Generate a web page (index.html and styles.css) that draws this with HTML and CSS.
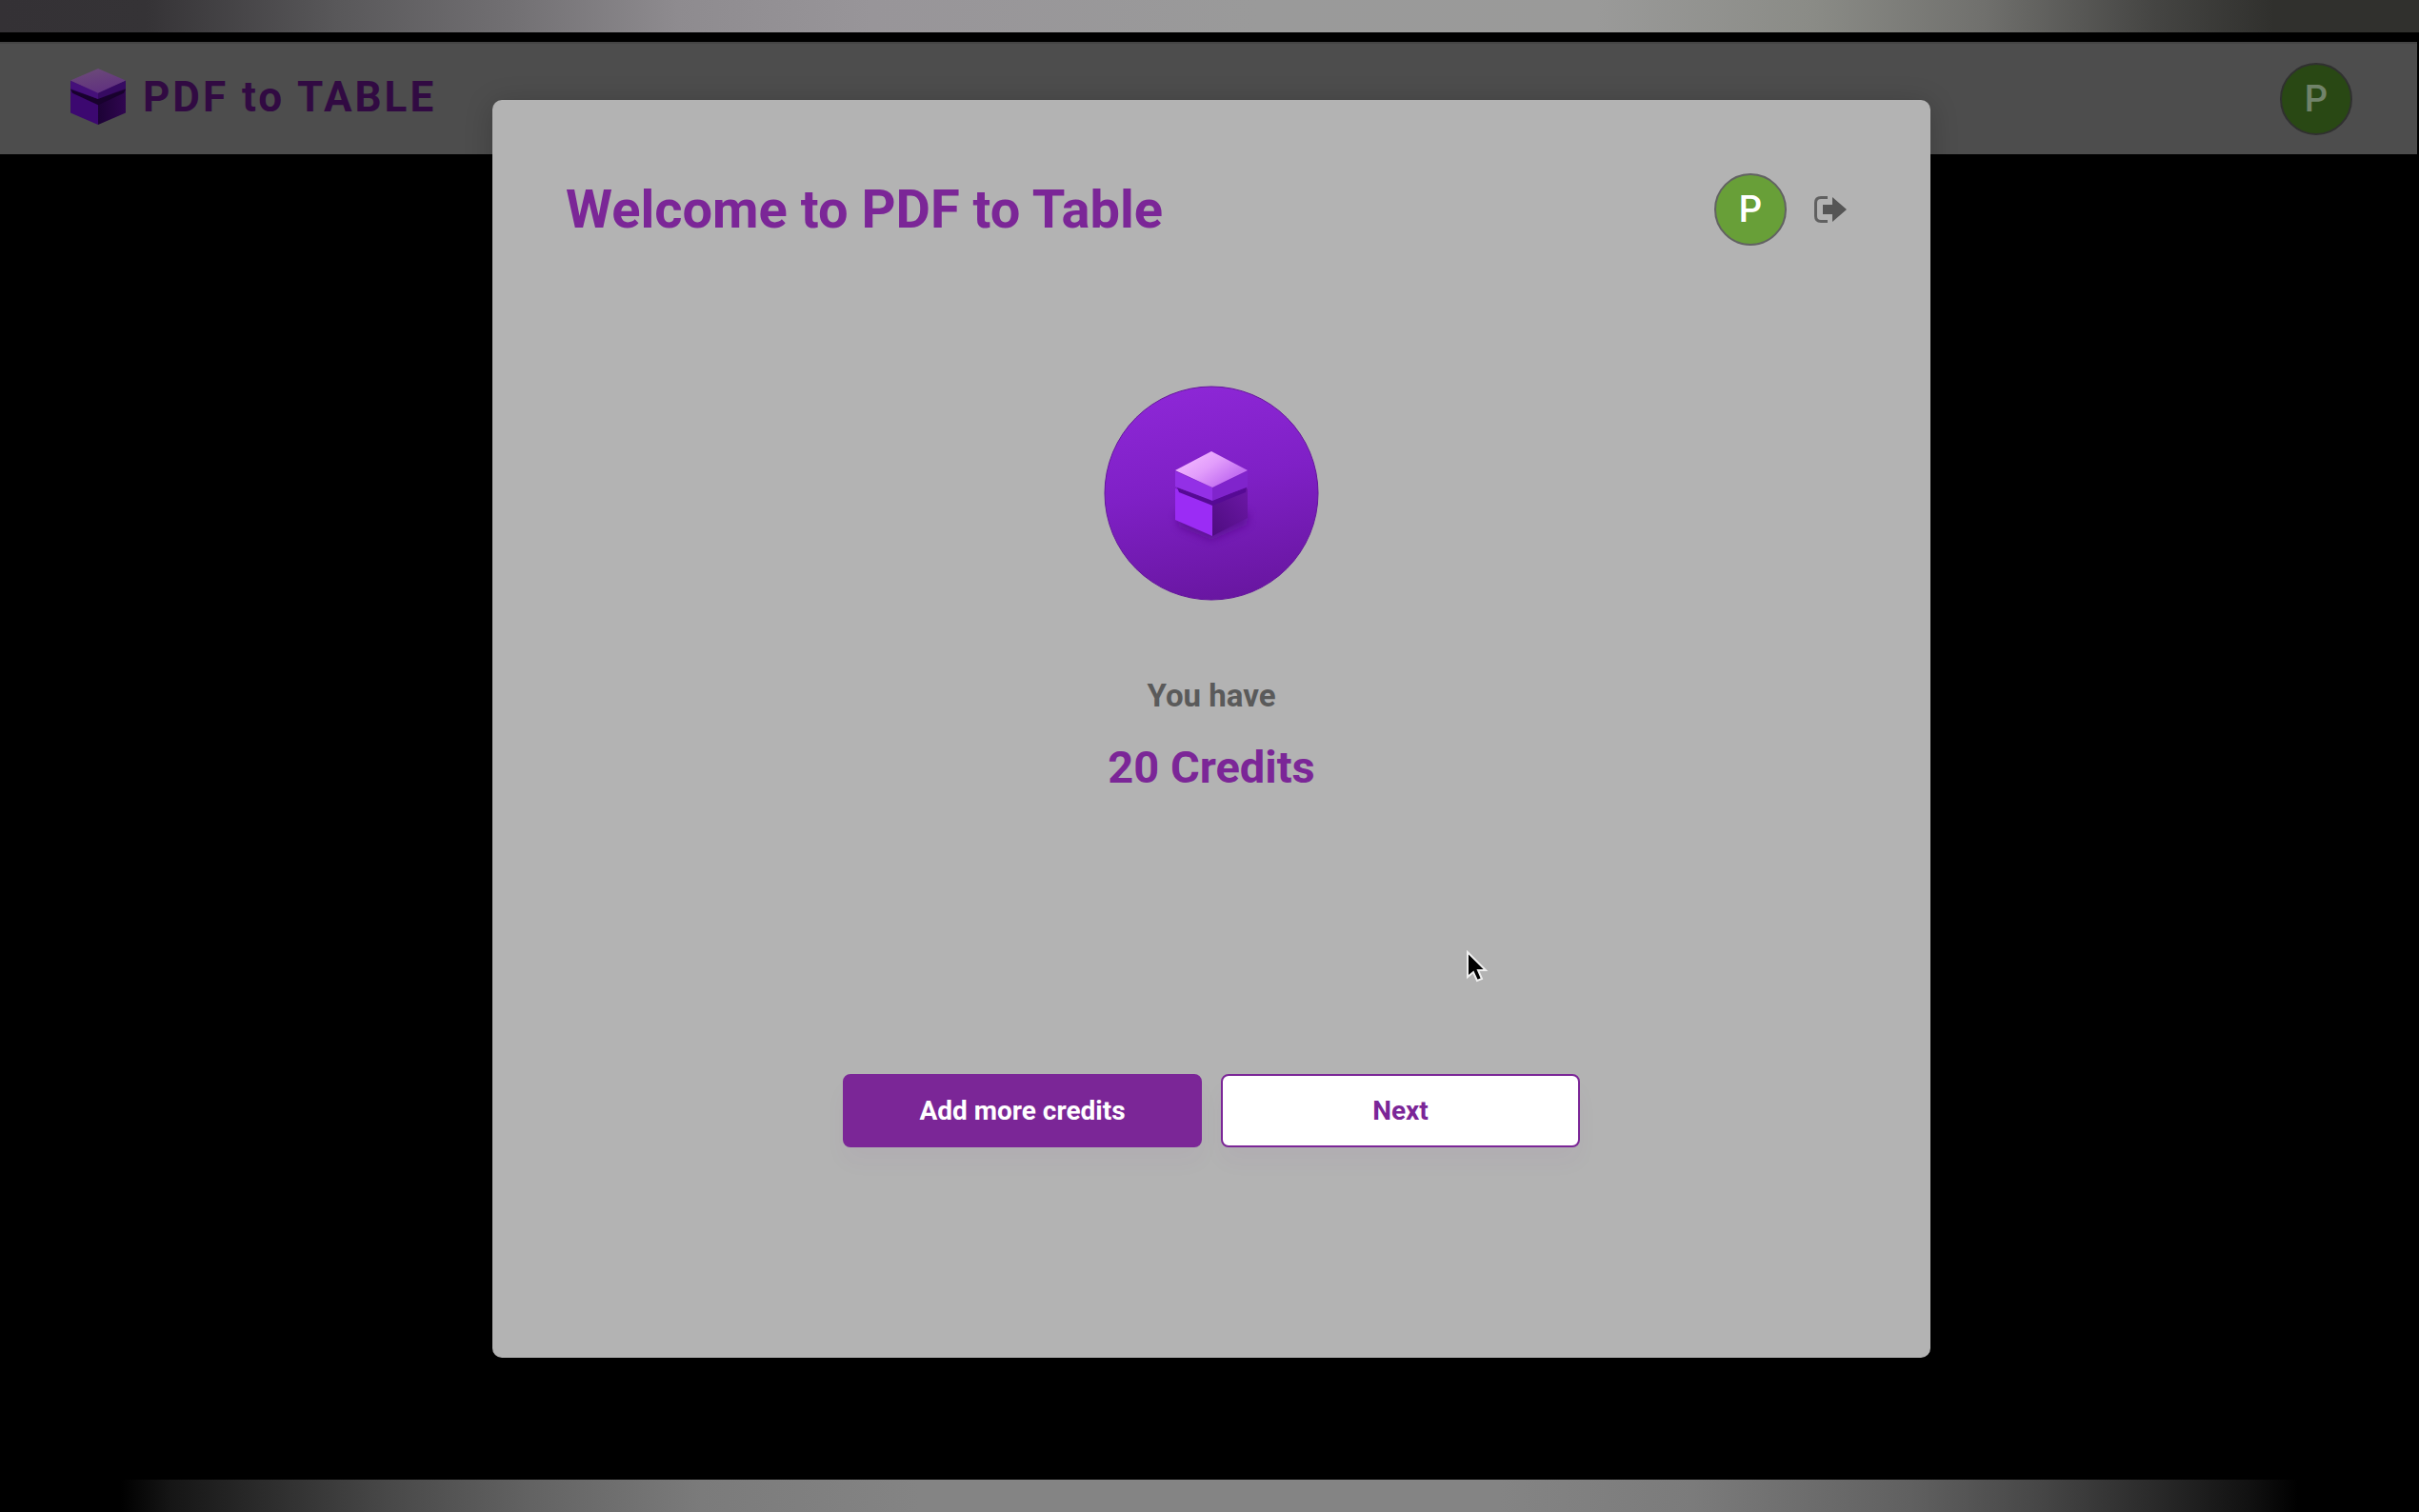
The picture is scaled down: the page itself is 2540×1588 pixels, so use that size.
FILE: index.html
```html
<!DOCTYPE html>
<html lang="en">
<head>
    <meta charset="UTF-8">
    <meta name="viewport" content="width=device-width, initial-scale=1.0">
    <title>PDF to Table</title>
    <link rel="stylesheet" href="styles.css">
</head>
<body>
    <div class="strip strip-top"></div>

    <div class="app">
        <header class="header">
            <a class="brand" href="#">
                <svg class="brand-logo" viewBox="0 0 58 58" aria-hidden="true">
                    <defs>
                        <linearGradient id="brand-top" x1="0.2" y1="0" x2="0.6" y2="1">
                            <stop offset="0" stop-color="#6c4b78"/>
                            <stop offset="1" stop-color="#603080"/>
                        </linearGradient>
                        <linearGradient id="brand-right" x1="0" y1="0" x2="1" y2="0">
                            <stop offset="0" stop-color="#1c0235"/>
                            <stop offset="1" stop-color="#300650"/>
                        </linearGradient>
                    </defs>
                    <path d="M1 14L29 28V57L1 45Z" fill="#3c0870"/>
                    <path d="M57 14L29 28V57L57 45Z" fill="url(#brand-right)"/>
                    <path d="M1 21L29 31L57 21L55 25L29 37L3 25Z" fill="#18022d"/>
                    <path d="M1 12L29 24V31L1 20Z" fill="#45107a"/>
                    <path d="M57 12L29 24V31L57 20Z" fill="#360a62"/>
                    <path d="M29 0L57 12L29 25L1 12Z" fill="url(#brand-top)"/>
                </svg>
                <span class="brand-name">PDF to TABLE</span>
            </a>
            <button class="avatar avatar-dimmed" aria-label="Account">P</button>
        </header>

        <div class="overlay">
            <main class="modal" role="dialog" aria-labelledby="modal-title">
                <div class="modal-header">
                    <h1 class="modal-title" id="modal-title">Welcome to PDF to Table</h1>
                    <div class="modal-actions">
                        <button class="avatar" aria-label="Account">P</button>
                        <button class="logout-button" aria-label="Log out">
                            <svg viewBox="0 0 34 28" width="34" height="28">
                                <path d="M14 1.500H7Q1.500 1.500 1.500 7V21Q1.500 26.500 7 26.500H14" fill="none" stroke="#606060" stroke-width="3"/>
                                <path d="M9 9H19V1L34 14L19 27V19H9Z" fill="#555"/>
                            </svg>
                        </button>
                    </div>
                </div>

                <svg class="credit-badge" viewBox="0 0 226 226" aria-hidden="true">
                    <defs>
                        <linearGradient id="badge-bg" x1="0.4" y1="0" x2="0.6" y2="1">
                            <stop offset="0" stop-color="#8d27d6"/>
                            <stop offset="0.45" stop-color="#7f20c6"/>
                            <stop offset="1" stop-color="#6816a0"/>
                        </linearGradient>
                        <linearGradient id="cube-top" x1="0.1" y1="0.2" x2="0.8" y2="0.7">
                            <stop offset="0" stop-color="#f2b8ff"/>
                            <stop offset="0.5" stop-color="#e29dfb"/>
                            <stop offset="1" stop-color="#c470f2"/>
                        </linearGradient>
                        <linearGradient id="cube-right" x1="0" y1="1" x2="1" y2="0">
                            <stop offset="0" stop-color="#4e0c80"/>
                            <stop offset="1" stop-color="#6c18a6"/>
                        </linearGradient>
                        <filter id="soft" x="-50%" y="-50%" width="200%" height="200%">
                            <feGaussianBlur stdDeviation="5"/>
                        </filter>
                    </defs>
                    <circle cx="113" cy="113" r="112" fill="url(#badge-bg)" stroke="#65169c" stroke-width="1"/>
                    <path d="M77 132L113 148L152 132L150 146L113 162L79 148Z" fill="#560f8c" opacity="0.8" filter="url(#soft)"/>
                    <path d="M75 108L114 122V158L75 141Z" fill="#9b2cf5"/>
                    <path d="M151 108L114 122V158L151 139Z" fill="url(#cube-right)"/>
                    <path d="M77 107L114 120L150 107L149 112L114 126L79 112Z" fill="#560a94"/>
                    <path d="M75 90L114 107V121L75 106Z" fill="#9330e6"/>
                    <path d="M151 90L114 107V121L151 106Z" fill="#8024cc"/>
                    <path d="M113 69L151 89L114 107L75 89Z" fill="url(#cube-top)"/>
                </svg>

                <p class="credit-label">You have</p>
                <p class="credit-amount">20 Credits</p>

                <div class="modal-buttons">
                    <button class="button button-primary">Add more credits</button>
                    <button class="button button-secondary">Next</button>
                </div>
            </main>
        </div>
    </div>

    <div class="strip strip-bottom"></div>

    <svg class="cursor" viewBox="0 0 24 36" aria-hidden="true">
        <path d="M2 2V28L8 23L12 32L17 30L13 21H21Z" fill="#000" stroke="#eee" stroke-width="2"/>
    </svg>
</body>
</html>
```
FILE: styles.css
```css
* {
    box-sizing: border-box;
}

body {
    font-family: Roboto, Arial, sans-serif;
    background-color: #000;
    margin: 0;
    min-height: 100vh;
    display: flex;
    flex-direction: column;
}

button {
    font-family: inherit;
    cursor: pointer;
}

.strip {
    height: 34px;
}

.strip-top {
    background: linear-gradient(to right, #343135 0%, #353336 6%, #59585a 14%, #716f72 21%, #8e8b8f 28%, #989599 36%, #9a9a9a 52%, #9a9a99 66%, #8a8b86 75%, #70706d 82%, #454543 89%, #30302d 94%, #30302d 100%);
}

.strip-bottom {
    background: linear-gradient(to right, #000 5%, #151515 7%, #2c2c2c 11%, #484848 16%, #636363 22%, #7b7b7b 29%, #848484 38%, #848484 62%, #7b7b7b 70%, #606060 79%, #484848 84%, #2a2a2a 89%, #111 93%, #000 95%);
}

.app {
    position: relative;
    flex: 1;
    margin: 10px 0 67px;
}

.header {
    display: flex;
    align-items: center;
    justify-content: space-between;
    height: 118px;
    margin-right: 2px;
    padding: 0 68px 0 73px;
    background-color: #4d4d4d;
    border-top: 2px solid #444;
}

.brand {
    display: flex;
    align-items: center;
    gap: 17px;
    padding-bottom: 4px;
    color: #310a42;
    text-decoration: none;
}

.brand-logo {
    width: 60px;
    height: 60px;
}

.brand-name {
    font-size: 44px;
    font-weight: 700;
    letter-spacing: 3px;
}

.avatar {
    width: 76px;
    height: 76px;
    padding: 0;
    border: 2px solid #626262;
    border-radius: 50%;
    background-color: #689f38;
    color: #fff;
    font-size: 38px;
    font-weight: 500;
}

.avatar-dimmed {
    background-color: #294814;
    border-color: #303030;
    color: #71836a;
}

.overlay {
    position: absolute;
    inset: 0;
    display: flex;
    justify-content: center;
    padding: 61px 513px 61px 517px;
}

.modal {
    flex: 1;
    display: flex;
    flex-direction: column;
    align-items: center;
    padding: 77px;
    background-color: #b3b3b3;
    border-radius: 10px;
    box-shadow: 0 4px 30px rgba(0, 0, 0, 0.2);
}

.modal-header {
    align-self: stretch;
    display: flex;
    align-items: center;
    justify-content: space-between;
}

.modal-title {
    margin: 0;
    color: #7b2697;
    font-size: 56px;
    font-weight: 700;
}

.modal-actions {
    display: flex;
    align-items: center;
    gap: 29px;
    padding-right: 11px;
}

.logout-button {
    display: flex;
    padding: 0;
    border: none;
    background: none;
}

.credit-badge {
    width: 226px;
    height: 226px;
    margin-top: 147px;
}

.credit-label {
    margin: 80px 0 0;
    color: #5a5a5a;
    font-size: 33px;
    font-weight: 700;
    line-height: 40px;
}

.credit-amount {
    margin: 26px 0 0;
    color: #7b2697;
    font-size: 47px;
    font-weight: 700;
    line-height: 58px;
}

.modal-buttons {
    display: flex;
    gap: 20px;
    margin-top: 293px;
}

.button {
    width: 377px;
    height: 77px;
    border: 2px solid #7b2697;
    border-radius: 8px;
    font-size: 28px;
    font-weight: 700;
    box-shadow: 0 16px 24px rgba(123, 38, 151, 0.03);
}

.button-primary {
    background-color: #7b2697;
    color: #fff;
}

.button-secondary {
    background-color: #fff;
    color: #7b2697;
}

/* pointer drawn on top of the page */
.cursor {
    position: absolute;
    left: 1539px;
    top: 998px;
    width: 24px;
    height: 36px;
}
```
